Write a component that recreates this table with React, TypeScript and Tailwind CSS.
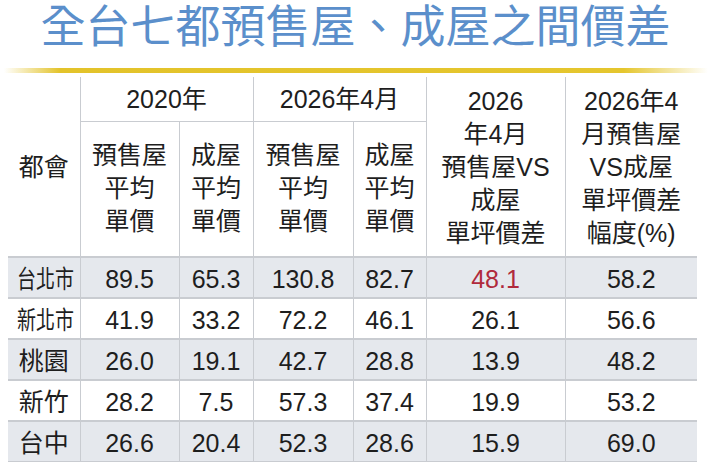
const rows = [
  { city: "台北市", v: ["89.5", "65.3", "130.8", "82.7", "48.1", "58.2"] },
  { city: "新北市", v: ["41.9", "33.2", "72.2", "46.1", "26.1", "56.6"] },
  { city: "桃園", v: ["26.0", "19.1", "42.7", "28.8", "13.9", "48.2"] },
  { city: "新竹", v: ["28.2", "7.5", "57.3", "37.4", "19.9", "53.2"] },
  { city: "台中", v: ["26.6", "20.4", "52.3", "28.6", "15.9", "69.0"] },
];

const font = "font-['Liberation_Sans','Noto_Sans_CJK_TC',sans-serif]";

function SubHead() {
  return (
    <>
      預售屋
      <br />
      平均
      <br />
      單價
    </>
  );
}

export default function App() {
  return (
    <main className={`h-[462px] w-[711px] overflow-hidden bg-white ${font} text-[#1e1e1e]`}>
      <h1 className="h-[56px] text-center text-[45px] leading-[56px] font-normal text-[#5b8fcb] tracking-[0px]">
        全台七都預售屋、成屋之間價差
      </h1>
      <div className="mt-[12px] ml-[4px] h-[5px] w-[704px] bg-[linear-gradient(90deg,rgba(227,195,42,0)_0%,#e3c32a_8%,#e5c62e_88%,rgba(227,195,42,0)_100%)]" />

      <table className="mt-[4px] ml-[8px] w-[689px] table-fixed border-collapse text-center text-[25px]">
        <colgroup>
          <col className="w-[72px]" />
          <col className="w-[99px]" />
          <col className="w-[74px]" />
          <col className="w-[100px]" />
          <col className="w-[73px]" />
          <col className="w-[139px]" />
          <col className="w-[132px]" />
        </colgroup>
        <thead>
          <tr className="h-[44px]">
            <th rowSpan={2} className="border-b-2 border-[#c9ccd1] font-normal leading-[30px]">
              都會
            </th>
            <th colSpan={2} className="border-b border-l border-[#c9ccd1] font-normal leading-[30px]">
              2020年
            </th>
            <th colSpan={2} className="border-b border-l border-[#c9ccd1] font-normal leading-[30px]">
              2026年4月
            </th>
            <th rowSpan={2} className="border-b-2 border-l border-[#c9ccd1] pt-[2px] font-normal leading-[33px]">
              2026
              <br />
              年4月
              <br />
              預售屋VS
              <br />
              成屋
              <br />
              單坪價差
            </th>
            <th rowSpan={2} className="border-b-2 border-l border-[#c9ccd1] pt-[2px] font-normal leading-[33px]">
              2026年4
              <br />
              月預售屋
              <br />
              VS成屋
              <br />
              單坪價差
              <br />
              幅度(%)
            </th>
          </tr>
          <tr className="h-[136px]">
            <th className="border-b-2 border-l border-[#c9ccd1] font-normal leading-[33px]">
              <SubHead />
            </th>
            <th className="border-b-2 border-l border-[#c9ccd1] font-normal leading-[33px]">
              成屋
              <br />
              平均
              <br />
              單價
            </th>
            <th className="border-b-2 border-l border-[#c9ccd1] font-normal leading-[33px]">
              <SubHead />
            </th>
            <th className="border-b-2 border-l border-[#c9ccd1] font-normal leading-[33px]">
              成屋
              <br />
              平均
              <br />
              單價
            </th>
          </tr>
        </thead>
        <tbody>
          {rows.map((row, i) => (
            <tr
              key={row.city}
              className={`h-[41px] ${i % 2 === 0 ? "bg-[#e5e8ed]" : "bg-white"}`}
            >
              <td className="border-b-2 border-[#c9ccd1] pt-[3px] leading-[30px]">
                {row.city.length === 3 ? (
                  <span className="inline-block scale-x-[0.76] whitespace-nowrap">{row.city}</span>
                ) : (
                  row.city
                )}
              </td>
              {row.v.map((val, j) => (
                <td
                  key={j}
                  className={`border-b-2 border-l border-[#c9ccd1] pt-[3px] leading-[30px] ${
                    i === 0 && j === 4 ? "text-[#b02a3c]" : ""
                  }`}
                >
                  {val}
                </td>
              ))}
            </tr>
          ))}
        </tbody>
      </table>
    </main>
  );
}
